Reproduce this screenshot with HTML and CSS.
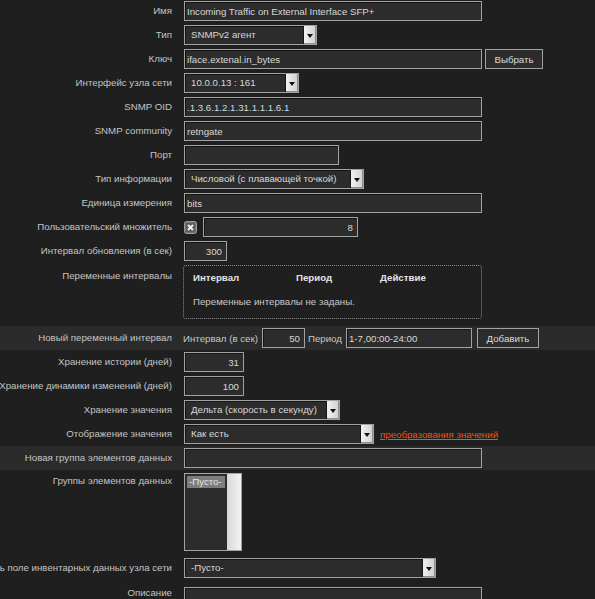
FILE: index.html
```html
<!DOCTYPE html>
<html lang="ru">
<head>
<meta charset="utf-8">
<title>Элемент данных</title>
<link rel="stylesheet" href="styles.css">
</head>
<body>
<div class="form">
  <div class="row">
    <div class="label">Имя</div>
    <div class="field"><input class="input w-wide" type="text" value="Incoming Traffic on External Interface SFP+"></div>
  </div>
  <div class="row">
    <div class="label">Тип</div>
    <div class="field"><div class="select w-type"><span class="value">SNMPv2 агент</span><span class="arrow"></span></div></div>
  </div>
  <div class="row">
    <div class="label">Ключ</div>
    <div class="field gap3"><input class="input w-wide" type="text" value="iface.extenal.in_bytes"><button class="btn w-choose">Выбрать</button></div>
  </div>
  <div class="row">
    <div class="label">Интерфейс узла сети</div>
    <div class="field"><div class="select w-iface"><span class="value">10.0.0.13 : 161</span><span class="arrow"></span></div></div>
  </div>
  <div class="row">
    <div class="label">SNMP OID</div>
    <div class="field"><input class="input w-wide" type="text" value=".1.3.6.1.2.1.31.1.1.1.6.1"></div>
  </div>
  <div class="row">
    <div class="label">SNMP community</div>
    <div class="field"><input class="input w-wide" type="text" value="retngate"></div>
  </div>
  <div class="row">
    <div class="label">Порт</div>
    <div class="field"><input class="input w-port" type="text" value=""></div>
  </div>
  <div class="row">
    <div class="label">Тип информации</div>
    <div class="field"><div class="select w-info"><span class="value">Числовой (с плавающей точкой)</span><span class="arrow"></span></div></div>
  </div>
  <div class="row">
    <div class="label">Единица измерения</div>
    <div class="field"><input class="input w-wide" type="text" value="bits"></div>
  </div>
  <div class="row">
    <div class="label">Пользовательский множитель</div>
    <div class="field gap6">
      <svg class="check" width="13" height="13" viewBox="0 0 13 13" aria-hidden="true">
        <rect x="0.5" y="0.5" width="12" height="12" rx="2" fill="#6f6f6f" stroke="#9c9c9c"/>
        <rect x="2" y="2" width="9" height="9" rx="1" fill="#5e5e5e"/>
        <path d="M4 4 L9 9 M9 4 L4 9" stroke="#f4f4f4" stroke-width="1.8"/>
      </svg>
      <input class="input num w-mult" type="text" value="8">
    </div>
  </div>
  <div class="row">
    <div class="label">Интервал обновления (в сек)</div>
    <div class="field"><input class="input num w-small" type="text" value="300"></div>
  </div>
  <div class="row top">
    <div class="label lbl-box">Переменные интервалы</div>
    <div class="field">
      <div class="intervals">
        <div class="int-head"><span>Интервал</span><span>Период</span><span>Действие</span></div>
        <div class="int-empty">Переменные интервалы не заданы.</div>
      </div>
    </div>
  </div>
  <div class="row new">
    <div class="label">Новый переменный интервал</div>
    <div class="field gap4">
      <span class="inline-label">Интервал (в сек)</span>
      <input class="input num w-small" type="text" value="50">
      <span class="inline-label">Период</span>
      <input class="input w-period" type="text" value="1-7,00:00-24:00">
      <button class="btn w-add">Добавить</button>
    </div>
  </div>
  <div class="row">
    <div class="label">Хранение истории (дней)</div>
    <div class="field"><input class="input num w-days" type="text" value="31"></div>
  </div>
  <div class="row">
    <div class="label">Хранение динамики изменений (дней)</div>
    <div class="field"><input class="input num w-days" type="text" value="100"></div>
  </div>
  <div class="row">
    <div class="label">Хранение значения</div>
    <div class="field"><div class="select w-store"><span class="value">Дельта (скорость в секунду)</span><span class="arrow"></span></div></div>
  </div>
  <div class="row">
    <div class="label">Отображение значения</div>
    <div class="field gap6"><div class="select w-show"><span class="value">Как есть</span><span class="arrow"></span></div><a class="link" href="#">преобразования значений</a></div>
  </div>
  <div class="row new">
    <div class="label">Новая группа элементов данных</div>
    <div class="field"><input class="input w-wide" type="text" value=""></div>
  </div>
  <div class="row top row-list">
    <div class="label lbl-list">Группы элементов данных</div>
    <div class="field">
      <div class="listbox">
        <div class="opts"><div class="opt sel">-Пусто-</div></div>
        <div class="scroll"></div>
      </div>
    </div>
  </div>
  <div class="row row-inv">
    <div class="label">Заполнять поле инвентарных данных узла сети</div>
    <div class="field"><div class="select w-inv"><span class="value">-Пусто-</span><span class="arrow"></span></div></div>
  </div>
  <div class="row top">
    <div class="label">Описание</div>
    <div class="field"><textarea class="textarea w-wide"></textarea></div>
  </div>
</div>
</body>
</html>
```
FILE: styles.css
```css
* { box-sizing: border-box; }
html, body { margin: 0; padding: 0; background: #1f1f1f; overflow: hidden; }
body {
  font-family: "Liberation Sans", Arial, sans-serif;
  font-size: 9.7px;
  color: #c6c6c6;
}
.form { margin-top: -1px; display: flex; flex-direction: column; }
.row {
  display: grid;
  grid-template-columns: 172px 1fr;
  column-gap: 12px;
  align-items: center;
  padding: 2px 0;
}
.row.new { background: #2b2b2b; }
.row.top { align-items: start; }
.label {
  display: flex;
  justify-content: flex-end;
  white-space: nowrap;
  color: #c4c4c4;
  line-height: 12px;
}
.lbl-box { padding-top: 5px; }
.lbl-list { padding-top: 2px; }
.field { display: flex; align-items: center; }
.gap3 { gap: 3px; }
.gap4 { gap: 4px; }
.gap6 { gap: 6px; }

.input, .textarea {
  height: 20px;
  background: #2c2c2c;
  border: 1px solid #a2a2a2;
  box-shadow: inset 1px 1px 0 #151515;
  color: #d8d8d8;
  font: inherit;
  padding: 0 2px;
  outline: none;
  margin: 0;
}
.num { text-align: right; padding-right: 4px; }
.textarea { height: 60px; resize: none; display: block; }
.btn {
  height: 20px;
  background: #2c2c2c;
  border: 1px solid #a2a2a2;
  color: #dcdcdc;
  font: inherit;
  padding: 0;
  margin: 0;
}
.select {
  display: flex;
  height: 20px;
  background: #2c2c2c;
  border: 1px solid #a2a2a2;
  box-shadow: inset 1px 1px 0 #151515;
  color: #d8d8d8;
}
.select .value { flex: 1; padding-left: 6px; line-height: 18px; white-space: nowrap; overflow: hidden; }
.select .arrow {
  width: 13px;
  border-left: 1px solid #151515;
  background: linear-gradient(90deg, #f2f2f2, #cfcfcf);
  box-shadow: inset -1px -1px 0 #8e8e8e;
  display: flex;
  align-items: center;
  justify-content: center;
}
.select .arrow::after {
  content: "";
  border-left: 3px solid transparent;
  border-right: 3px solid transparent;
  border-top: 4px solid #111;
  margin-top: 1px;
}
.check { display: block; flex: none; }

.w-wide { width: 298px; }
.w-type { width: 133px; }
.w-iface { width: 115px; }
.w-port { width: 155px; }
.w-info { width: 180px; }
.w-mult { width: 155px; }
.w-small { width: 43px; }
.w-choose { width: 58px; }
.w-period { width: 126px; }
.w-add { width: 62px; margin-left: 1px; }
.w-days { width: 60px; }
.w-store { width: 156px; }
.w-show { width: 190px; }
.w-inv { width: 252px; }

.intervals {
  width: 299px;
  margin-left: -1px;
  border: 1px dotted #8c8c8c;
  border-radius: 3px;
  padding: 6px 9px 10px;
  margin-bottom: 5px;
}
.int-head {
  display: grid;
  grid-template-columns: 103px 84px auto;
  font-weight: bold;
  color: #e4e4e4;
  line-height: 12px;
}
.int-empty { margin-top: 12px; line-height: 12px; color: #c8c8c8; }
.inline-label { color: #c8c8c8; white-space: nowrap; margin-left: -1px; }
.link { color: #f2520c; text-decoration: underline; white-space: nowrap; }

.listbox {
  width: 58px;
  height: 78px;
  border: 1px solid #a2a2a2;
  background: #2c2c2c;
  display: flex;
}
.listbox .opts { flex: 1; padding: 2px; }
.opt { line-height: 12px; padding: 0 2px; color: #e8e8e8; }
.opt.sel { background: #7d7d7d; }
.listbox .scroll { width: 14px; background: linear-gradient(90deg, #d8d8d8, #f3f3f3); }

.row-list { padding-top: 3px; padding-bottom: 5px; }
.row-inv { padding-bottom: 7px; }
```
